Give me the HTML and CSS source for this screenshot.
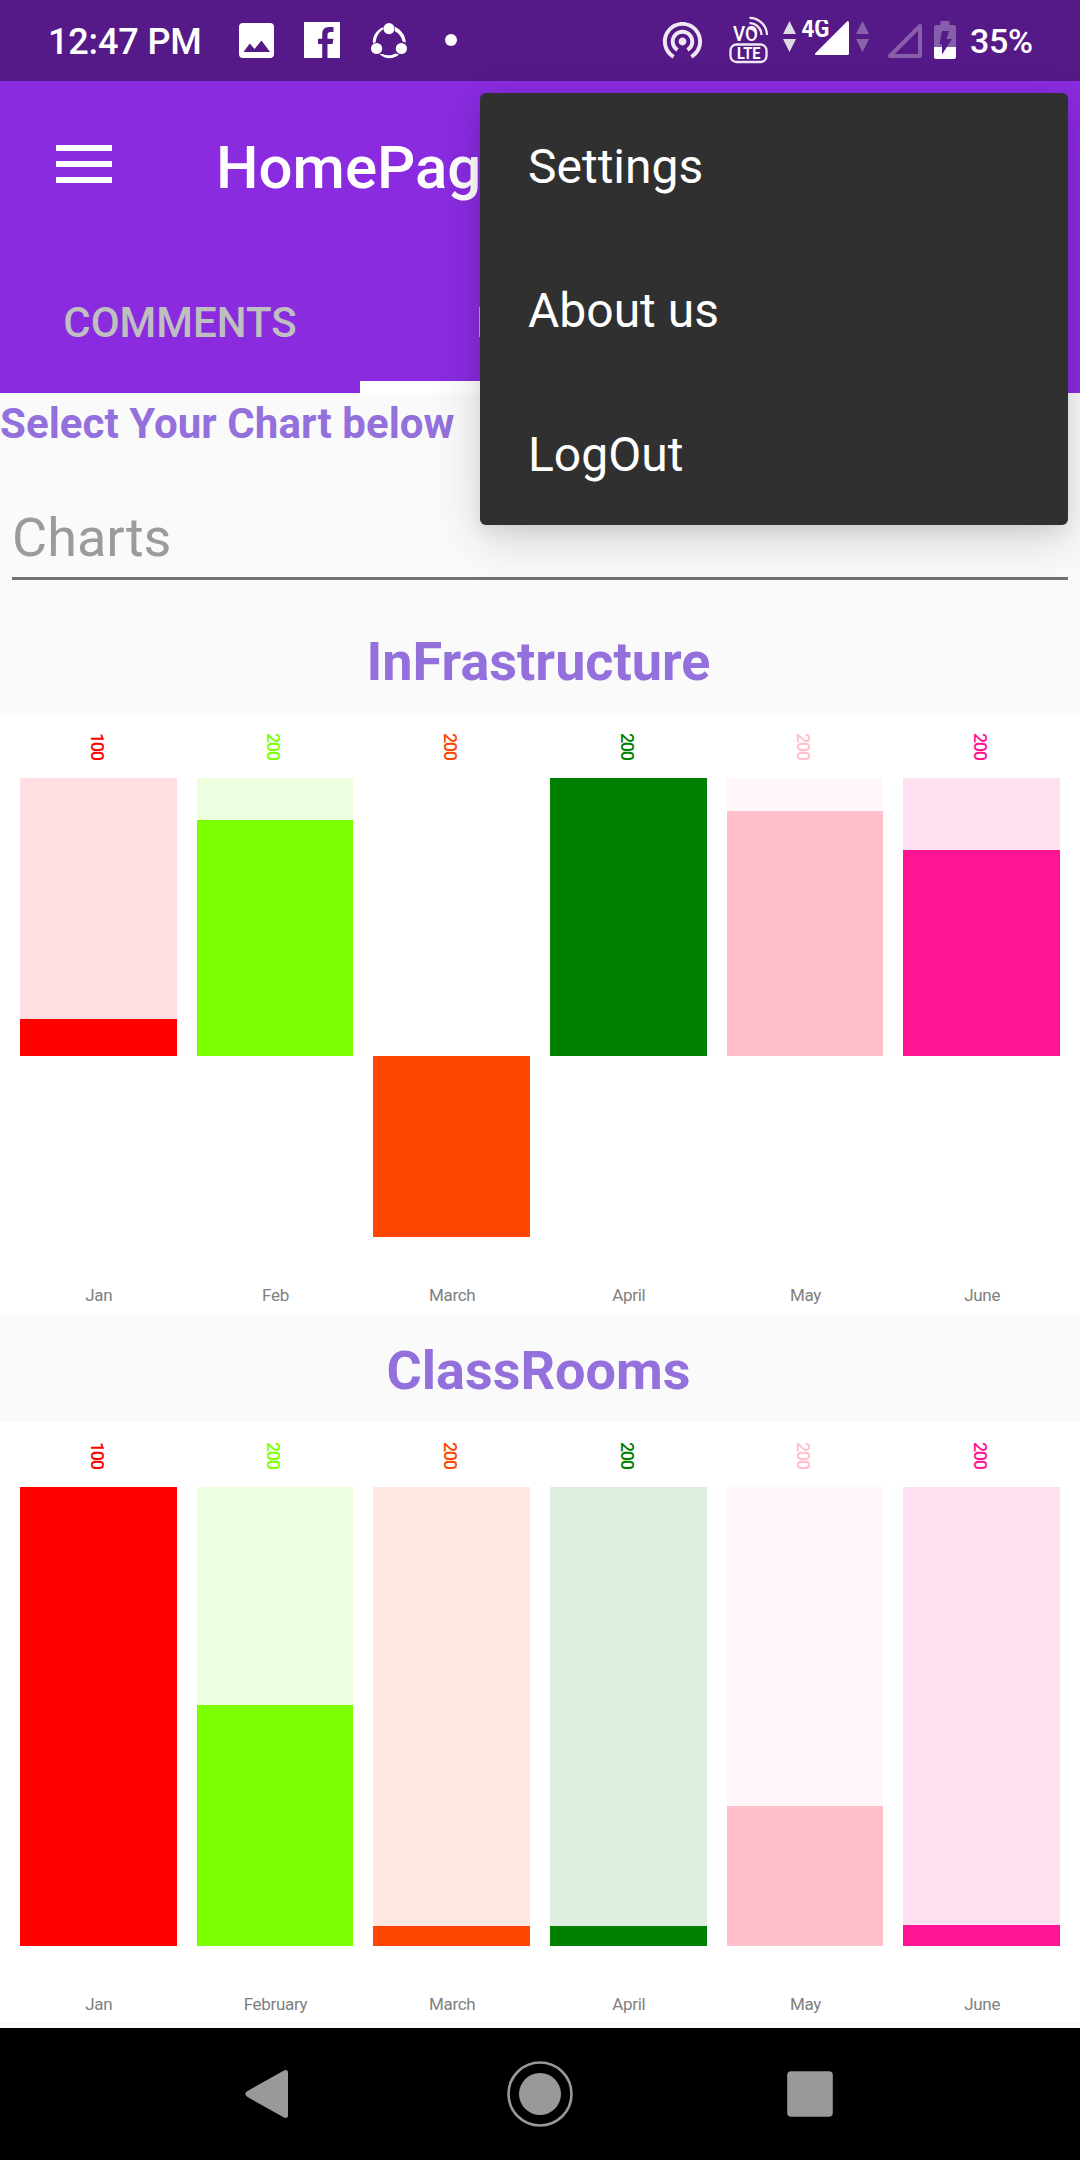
FILE: index.html
```html
<!DOCTYPE html>
<html lang="en">
<head>
<meta charset="utf-8">
<title>HomePage</title>
<link rel="stylesheet" href="styles.css">
</head>
<body>
<div class="screen">
  <header class="status">
    <span class="clock">12:47 PM</span>
    <svg class="s-image" width="35" height="35" viewBox="0 0 35 35"><path fill="#fff" fill-rule="evenodd" d="M4 0H31a4 4 0 0 1 4 4V31a4 4 0 0 1-4 4H4a4 4 0 0 1-4-4V4a4 4 0 0 1 4-4ZM4.500 29H31L22.500 17.500L15.500 26L10.800 20.500Z"/></svg>
    <svg class="s-fb" width="36" height="36" viewBox="0 0 36 36"><path fill="#fff" d="M0 0H36V36H23.500V22H28.600L29.400 16.700H23.500V12.800C23.500 10.800 24.500 10 26.500 10H29.500V5H25C20.500 5 18.200 7.800 18.200 12.200V16.700H14V22H18.200V36H0Z"/></svg>
    <svg class="s-share" width="36" height="36" viewBox="0 0 36 36"><g fill="#fff"><circle cx="18" cy="5.600" r="5.600"/><circle cx="5.600" cy="25.500" r="5.600"/><circle cx="30.400" cy="25.500" r="5.600"/><path d="M11.500 4.300C4.500 8 1.200 14 2 20.500L4.800 19C5.200 13.500 8 9 12.500 6Z"/><path d="M24 3.800C31 7.500 34.500 13 34.800 19.500L31.500 18.500C30.500 14 28.500 11 24 8.300Z"/><path d="M8.500 31C14.500 36.500 22 36.800 28 31.500L24.500 30.500C20 32.800 16 33 11.500 31Z"/></g></svg>
    <span class="dot"></span>
    <span class="spacer"></span>
    <svg class="s-hotspot" width="47" height="47" viewBox="0 0 24 24"><path fill="#eee8f3" d="M12 11c-1.100 0-2 .9-2 2s.9 2 2 2 2-.9 2-2-.9-2-2-2zm6 2c0-3.310-2.690-6-6-6s-6 2.690-6 6c0 2.220 1.210 4.150 3 5.190l1-1.740c-1.190-.7-2-1.970-2-3.450 0-2.210 1.790-4 4-4s4 1.790 4 4c0 1.480-.81 2.750-2 3.450l1 1.740c1.790-1.040 3-2.970 3-5.190zM12 3C6.480 3 2 7.480 2 13c0 3.700 2.010 6.920 4.990 8.650l1-1.730C5.610 18.530 4 15.960 4 13c0-4.420 3.580-8 8-8s8 3.580 8 8c0 2.960-1.610 5.530-4 6.920l1 1.730c2.990-1.730 5-4.950 5-8.650 0-5.520-4.480-10-10-10z"/></svg>
    <svg class="s-volte" width="42" height="48" viewBox="0 0 42 48"><g fill="none" stroke="#eee8f3" stroke-width="2.300"><rect x="2.500" y="28.500" width="36" height="17.500" rx="6"/><path d="M21.500 1.800A17.500 17.500 0 0 1 39 19M21.500 7.200A12 12 0 0 1 33.500 19M21.500 12.300A8 8 0 0 1 28 17"/></g><g class="glyphs"><text x="5" y="25.300" font-size="19.500" textLength="25" lengthAdjust="spacingAndGlyphs">VO</text><text x="9" y="43.300" font-size="16.500" textLength="23.500" lengthAdjust="spacingAndGlyphs" class="heavy">LTE</text></g></svg>
    <svg class="s-signal" width="66" height="36" viewBox="0 0 66 36"><path fill="#dfdae4" d="M0 14L6.500 1L13 14ZM0 19H13L6.500 32Z"/><path fill="#fff" d="M64.500 1Q66 1 66 2.500V33.500Q66 35 64.500 35H33.500Q31 35 32.500 33Z"/><text x="18.500" y="17.300" font-size="25" textLength="28" lengthAdjust="spacingAndGlyphs" class="glyphs heavy">4G</text></svg>
    <svg class="s-dim" width="13" height="36" viewBox="0 0 13 36"><path fill="#8963a9" d="M0 14L6.500 1L13 14ZM0 19H13L6.500 32Z"/></svg>
    <svg class="s-empty" width="34" height="34" viewBox="0 0 34 34"><path fill="none" stroke="#875eac" stroke-width="4" stroke-linejoin="round" d="M32 2V32H2Z"/></svg>
    <svg class="s-batt" width="22" height="38" viewBox="0 0 22 38"><path fill="#875eac" d="M6.500 0H15.500V4H20Q22 4 22 6V26H0V6Q0 4 2 4H6.500Z"/><path fill="#fff" d="M0 26H22V36Q22 38 20 38H2Q0 38 0 36Z"/><path fill="#541a87" d="M8 10H15L12.500 18H18L8 33.500V23H5.500Z"/></svg>
    <span class="percent">35%</span>
  </header>

  <div class="appbar">
    <div class="toolbar">
      <span class="burger"><i></i><i></i><i></i></span>
      <h1 class="title">HomePage</h1>
    </div>
    <nav class="tabs">
      <span class="tab">COMMENTS</span>
      <span class="tab active">HOME</span>
      <span class="tab"></span>
    </nav>
  </div>

  <main class="content">
    <p class="prompt">Select Your Chart below</p>
    <div class="field">Charts</div>

    <h2 class="heading first">InFrastructure</h2>
    <section class="chart signed">
      <div class="col red"><span class="max">100</span><div class="plot"><div class="track"><div class="fill" style="height:37px"></div></div></div><span class="month">Jan</span></div>
      <div class="col lime"><span class="max">200</span><div class="plot"><div class="track"><div class="fill" style="height:236px"></div></div></div><span class="month">Feb</span></div>
      <div class="col orange"><span class="max">200</span><div class="plot"><div class="track none"></div><div class="fill" style="height:181px"></div></div><span class="month">March</span></div>
      <div class="col green"><span class="max">200</span><div class="plot"><div class="track"><div class="fill" style="height:278px"></div></div></div><span class="month">April</span></div>
      <div class="col pink"><span class="max">200</span><div class="plot"><div class="track"><div class="fill" style="height:245px"></div></div></div><span class="month">May</span></div>
      <div class="col magenta"><span class="max">200</span><div class="plot"><div class="track"><div class="fill" style="height:206px"></div></div></div><span class="month">June</span></div>
    </section>

    <h2 class="heading">ClassRooms</h2>
    <section class="chart">
      <div class="col red"><span class="max">100</span><div class="plot"><div class="track"><div class="fill" style="height:459px"></div></div></div><span class="month">Jan</span></div>
      <div class="col lime"><span class="max">200</span><div class="plot"><div class="track"><div class="fill" style="height:241px"></div></div></div><span class="month">February</span></div>
      <div class="col orange"><span class="max">200</span><div class="plot"><div class="track"><div class="fill" style="height:20px"></div></div></div><span class="month">March</span></div>
      <div class="col green"><span class="max">200</span><div class="plot"><div class="track"><div class="fill" style="height:20px"></div></div></div><span class="month">April</span></div>
      <div class="col pink"><span class="max">200</span><div class="plot"><div class="track"><div class="fill" style="height:140px"></div></div></div><span class="month">May</span></div>
      <div class="col magenta"><span class="max">200</span><div class="plot"><div class="track"><div class="fill" style="height:21px"></div></div></div><span class="month">June</span></div>
    </section>
  </main>

  <footer class="navbar">
    <svg width="66" height="66" viewBox="0 0 66 66"><path fill="#999" d="M10.500 30L47 9.500Q51 8 51 12V54Q51 58 47 56.500L10.500 36Q6 33 10.500 30Z"/></svg>
    <svg width="66" height="66" viewBox="0 0 66 66"><circle cx="33" cy="33" r="31.500" fill="none" stroke="#999" stroke-width="2.600"/><circle cx="33" cy="33" r="21" fill="#999"/></svg>
    <svg width="66" height="66" viewBox="0 0 66 66"><rect x="10.200" y="10.200" width="45.600" height="45.600" rx="4" fill="#999"/></svg>
  </footer>

  <div class="menu">
    <span>Settings</span>
    <span>About us</span>
    <span>LogOut</span>
  </div>
</div>
</body>
</html>
```
FILE: styles.css
```css
* { box-sizing: border-box; }
body { margin: 0; font-family: Roboto, sans-serif; background: #fafafa; }
h1, h2, p { margin: 0; }
.screen { position: relative; width: 1080px; height: 2160px; display: flex; flex-direction: column; overflow: hidden; }

.status { height: 81px; flex: none; display: flex; align-items: flex-start; background: #551a87; color: #fff; font-weight: 500; padding: 0 48px 0 48px; }
.status svg { flex: none; display: block; }
.clock { font-size: 36px; line-height: 85px; width: 191px; letter-spacing: -0.15px; white-space: nowrap; }
.s-image { margin-top: 23px; }
.s-fb { margin: 22px 0 0 30px; }
.s-share { margin: 23px 0 0 31px; }
.dot { width: 12px; height: 12px; border-radius: 50%; background: #fff; margin: 34px 0 0 38px; }
.spacer { flex: 1; }
.s-hotspot { margin-top: 16px; }
.s-volte { margin: 16px 0 0 22px; }
.s-signal { margin: 20px 0 0 13px; }
.s-dim { margin: 20px 0 0 7px; }
.s-empty { margin: 24px 0 0 19px; }
.s-batt { margin: 21px 0 0 12px; }
.percent { width: 62px; margin-left: 14px; font-size: 34px; line-height: 83px; letter-spacing: -0.3px; white-space: nowrap; }
.glyphs { fill: #fff; font-family: Roboto, sans-serif; font-weight: 500; }
.heavy { font-weight: 700; }

.appbar { flex: none; background: #8a2be0; color: #fff; }
.toolbar { height: 168px; display: flex; align-items: flex-start; }
.burger { display: flex; flex-direction: column; gap: 10px; width: 56px; margin: 64px 0 0 56px; }
.burger i { height: 6px; background: #fff; }
.title { margin-left: 104px; font-size: 60px; font-weight: 500; line-height: 173px; }
.tabs { height: 144px; display: grid; grid-template: 144px / repeat(3, 1fr); }
.tab { height: 144px; padding-top: 3px; line-height: 141px; font-size: 42px; font-weight: 500; text-align: center; color: #bfbfbf; }
.tab.active { padding-right: 8px; color: #fff; border-bottom: 12px solid #fff; }

.content { flex: 1; background: #fafafa; }
.prompt { font-size: 42px; line-height: 61px; font-weight: 700; letter-spacing: 0.06px; color: #9370db; }
.field { margin: 0 12px; height: 126px; padding-top: 50px; font-size: 54px; line-height: 67px; color: #9b9b9b; border-bottom: 3px solid #727272; }
.heading { height: 109px; padding: 26px 3px 0 0; font-size: 54px; line-height: 63px; font-weight: 700; text-align: center; color: #9370db; }
.heading.first { margin-top: 24px; }

.chart { height: 600px; padding: 0 20px; background: #fff; display: grid; grid-template-columns: repeat(6, 1fr); column-gap: 20px; }
.col { display: flex; flex-direction: column; align-items: stretch; }
.max { height: 65px; padding: 20px 3px 0 0; writing-mode: vertical-rl; align-self: center; font-size: 18px; line-height: 20px; font-weight: 500; letter-spacing: -1.4px; color: var(--bar); }
.plot { height: 459px; }
.track { height: 459px; background: var(--tint); display: flex; flex-direction: column; justify-content: flex-end; }
.signed .track { height: 278px; }
.track.none { background: none; }
.fill { background: var(--bar); }
.month { padding: 46px 0 0 1px; font-size: 17px; line-height: 24px; text-align: center; color: #808080; letter-spacing: -0.3px; }
.red { --bar: #f00; --tint: #ffdfe1; }
.lime { --bar: #7cff00; --tint: #edffdf; }
.orange { --bar: #ff4600; --tint: #ffe6de; }
.green { --bar: #008000; --tint: #ddeee0; }
.pink { --bar: #ffbfcb; --tint: #fff6f9; }
.magenta { --bar: #ff1493; --tint: #fee0f0; }

.navbar { height: 132px; flex: none; background: #000; display: flex; justify-content: center; align-items: center; gap: 204px; }

.menu { position: absolute; left: 480px; top: 93px; width: 588px; height: 432px; border-radius: 6px; background: #303030; color: #fff; display: flex; flex-direction: column; box-shadow: 0 14px 50px rgba(0,0,0,.16), 0 8px 16px rgba(0,0,0,.06); }
.menu span { height: 144px; padding: 4px 48px 0; font-size: 48px; line-height: 140px; }
```
